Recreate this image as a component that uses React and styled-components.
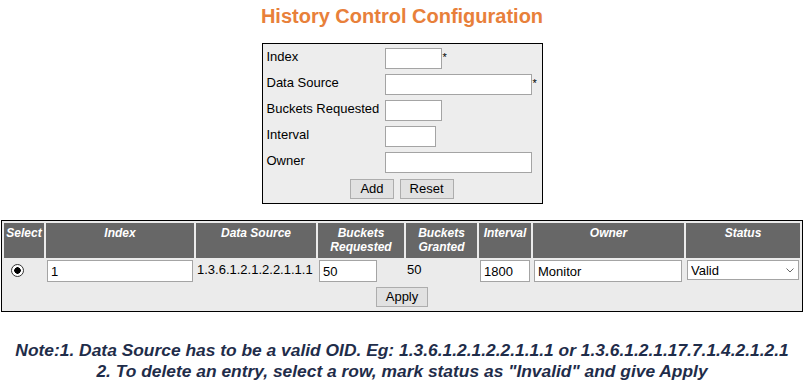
import React from "react";
import styled, { createGlobalStyle } from "styled-components";

const GlobalStyle = createGlobalStyle`
  body {
    margin: 0;
    background: #fff;
    color: #000;
    font-family: "Liberation Sans", Arial, sans-serif;
    font-size: 13px;
  }
`;

const Page = styled.div`
  width: 804px;
`;

const Title = styled.h1`
  margin: 5px 0 0;
  text-align: center;
  font-size: 20px;
  line-height: 23px;
  font-weight: bold;
  color: #e8803a;
`;

const FormBox = styled.div`
  width: 281px;
  box-sizing: border-box;
  margin: 15px auto 0;
  padding: 4px 4px 4px;
  border: 1px solid #000;
  background: #ededed;
  display: grid;
  grid-template-columns: 118px auto;
  row-gap: 5px;
`;

const Label = styled.div`
  padding-top: 1px;
  line-height: 15px;
`;

const Field = styled.div`
  display: flex;
  align-items: flex-start;
  height: 21px;
`;

const Star = styled.span`
  font-size: 11px;
  line-height: 11px;
  margin: 4px 0 0 1px;
`;

const TextInput = styled.input`
  box-sizing: border-box;
  width: ${(p) => p.$w || 57}px;
  height: ${(p) => p.$h || 21}px;
  margin: 0;
  padding: 0 3px;
  border: 1px solid #a4a4a4;
  background: #fff;
  font-family: "Liberation Sans", Arial, sans-serif;
  font-size: 13px;
  color: #000;
  outline: none;
  &.fill {
    width: 100%;
  }
`;

const ButtonRow = styled.div`
  grid-column: 1 / span 2;
  display: flex;
  justify-content: center;
  gap: 6px;
  margin-top: 1px;
`;

const Button = styled.button`
  height: 20px;
  margin: 0;
  padding: 0 9px;
  border: 1px solid #adadad;
  background: #e1e1e1;
  color: #000;
  font-family: "Liberation Sans", Arial, sans-serif;
  font-size: 13px;
  line-height: 18px;
`;

const Table = styled.table`
  width: 802px;
  margin: 16px 0 0 1px;
  border: 1px solid #000;
  border-spacing: 2px;
  background: #ebebeb;
  table-layout: fixed;
`;

const Th = styled.th`
  box-sizing: border-box;
  width: ${(p) => p.$w}px;
  padding: 3px 1px 4px;
  background: #676767;
  color: #fff;
  font-size: 12px;
  line-height: 14px;
  font-weight: bold;
  font-style: italic;
  text-align: center;
  vertical-align: top;
`;

const Td = styled.td`
  padding: 0 1px;
  vertical-align: top;
  line-height: 15px;
  padding-top: ${(p) => (p.$text ? 2 : 0)}px;
`;

const ApplyCell = styled.td`
  padding: 3px 0 2px;
  text-align: center;
`;

const Radio = styled.input`
  appearance: none;
  width: 13px;
  height: 13px;
  margin: 4px 0 0 6px;
  border: 1px solid #333;
  border-radius: 50%;
  background: radial-gradient(circle, #000 0 3px, #fff 3.5px);
`;

const SelectWrap = styled.div`
  position: relative;
  width: 112px;
`;

const StatusSelect = styled.select`
  appearance: none;
  box-sizing: border-box;
  width: 112px;
  height: 20px;
  margin: 0;
  padding: 0 3px;
  border: 1px solid #a4a4a4;
  border-radius: 0;
  background: #fff;
  font-family: "Liberation Sans", Arial, sans-serif;
  font-size: 13px;
  color: #000;
  outline: none;
`;

const Chevron = styled.svg`
  position: absolute;
  right: 5px;
  top: 8px;
  pointer-events: none;
`;

const Note = styled.div`
  margin-top: 28px;
  text-align: center;
  font-size: 17.4px;
  line-height: 21px;
  font-weight: bold;
  font-style: italic;
  color: #1f2d4a;
`;

const headers = [
  ["Select", 40],
  ["Index", 148],
  ["Data Source", 120],
  ["Buckets Requested", 86, "Buckets", "Requested"],
  ["Buckets Granted", 71, "Buckets", "Granted"],
  ["Interval", 52],
  ["Owner", 151],
  ["Status", 114],
];

export default function App() {
  return (
    <Page>
      <GlobalStyle />
      <Title>History Control Configuration</Title>

      <FormBox>
        <Label>Index</Label>
        <Field>
          <TextInput $w={57} />
          <Star>*</Star>
        </Field>
        <Label>Data Source</Label>
        <Field>
          <TextInput $w={147} />
          <Star>*</Star>
        </Field>
        <Label>Buckets Requested</Label>
        <Field>
          <TextInput $w={57} />
        </Field>
        <Label>Interval</Label>
        <Field>
          <TextInput $w={51} />
        </Field>
        <Label>Owner</Label>
        <Field>
          <TextInput $w={147} />
        </Field>
        <ButtonRow>
          <Button>Add</Button>
          <Button>Reset</Button>
        </ButtonRow>
      </FormBox>

      <Table>
        <thead>
          <tr>
            {headers.map(([name, w, a, b]) => (
              <Th key={name} $w={w}>
                {a ? (
                  <>
                    {a}
                    <br />
                    {b}
                  </>
                ) : (
                  name
                )}
              </Th>
            ))}
          </tr>
        </thead>
        <tbody>
          <tr>
            <Td>
              <Radio type="radio" name="sel" defaultChecked />
            </Td>
            <Td>
              <TextInput className="fill" $h={22} defaultValue="1" />
            </Td>
            <Td $text>1.3.6.1.2.1.2.2.1.1.1</Td>
            <Td>
              <TextInput $w={58} $h={22} defaultValue="50" />
            </Td>
            <Td $text>50</Td>
            <Td>
              <TextInput $w={50} $h={22} defaultValue="1800" />
            </Td>
            <Td>
              <TextInput $w={148} $h={22} defaultValue="Monitor" />
            </Td>
            <Td>
              <SelectWrap>
                <StatusSelect defaultValue="Valid">
                  <option>Valid</option>
                  <option>Invalid</option>
                </StatusSelect>
                <Chevron width="8" height="5" viewBox="0 0 8 5">
                  <path d="M0.5 0.5 L4 4 L7.5 0.5" fill="none" stroke="#666" strokeWidth="1" />
                </Chevron>
              </SelectWrap>
            </Td>
          </tr>
          <tr>
            <ApplyCell colSpan={8}>
              <Button>Apply</Button>
            </ApplyCell>
          </tr>
        </tbody>
      </Table>

      <Note>
        Note:1. Data Source has to be a valid OID. Eg: 1.3.6.1.2.1.2.2.1.1.1 or 1.3.6.1.2.1.17.7.1.4.2.1.2.1
        <br />
        2. To delete an entry, select a row, mark status as "Invalid" and give Apply
      </Note>
    </Page>
  );
}
